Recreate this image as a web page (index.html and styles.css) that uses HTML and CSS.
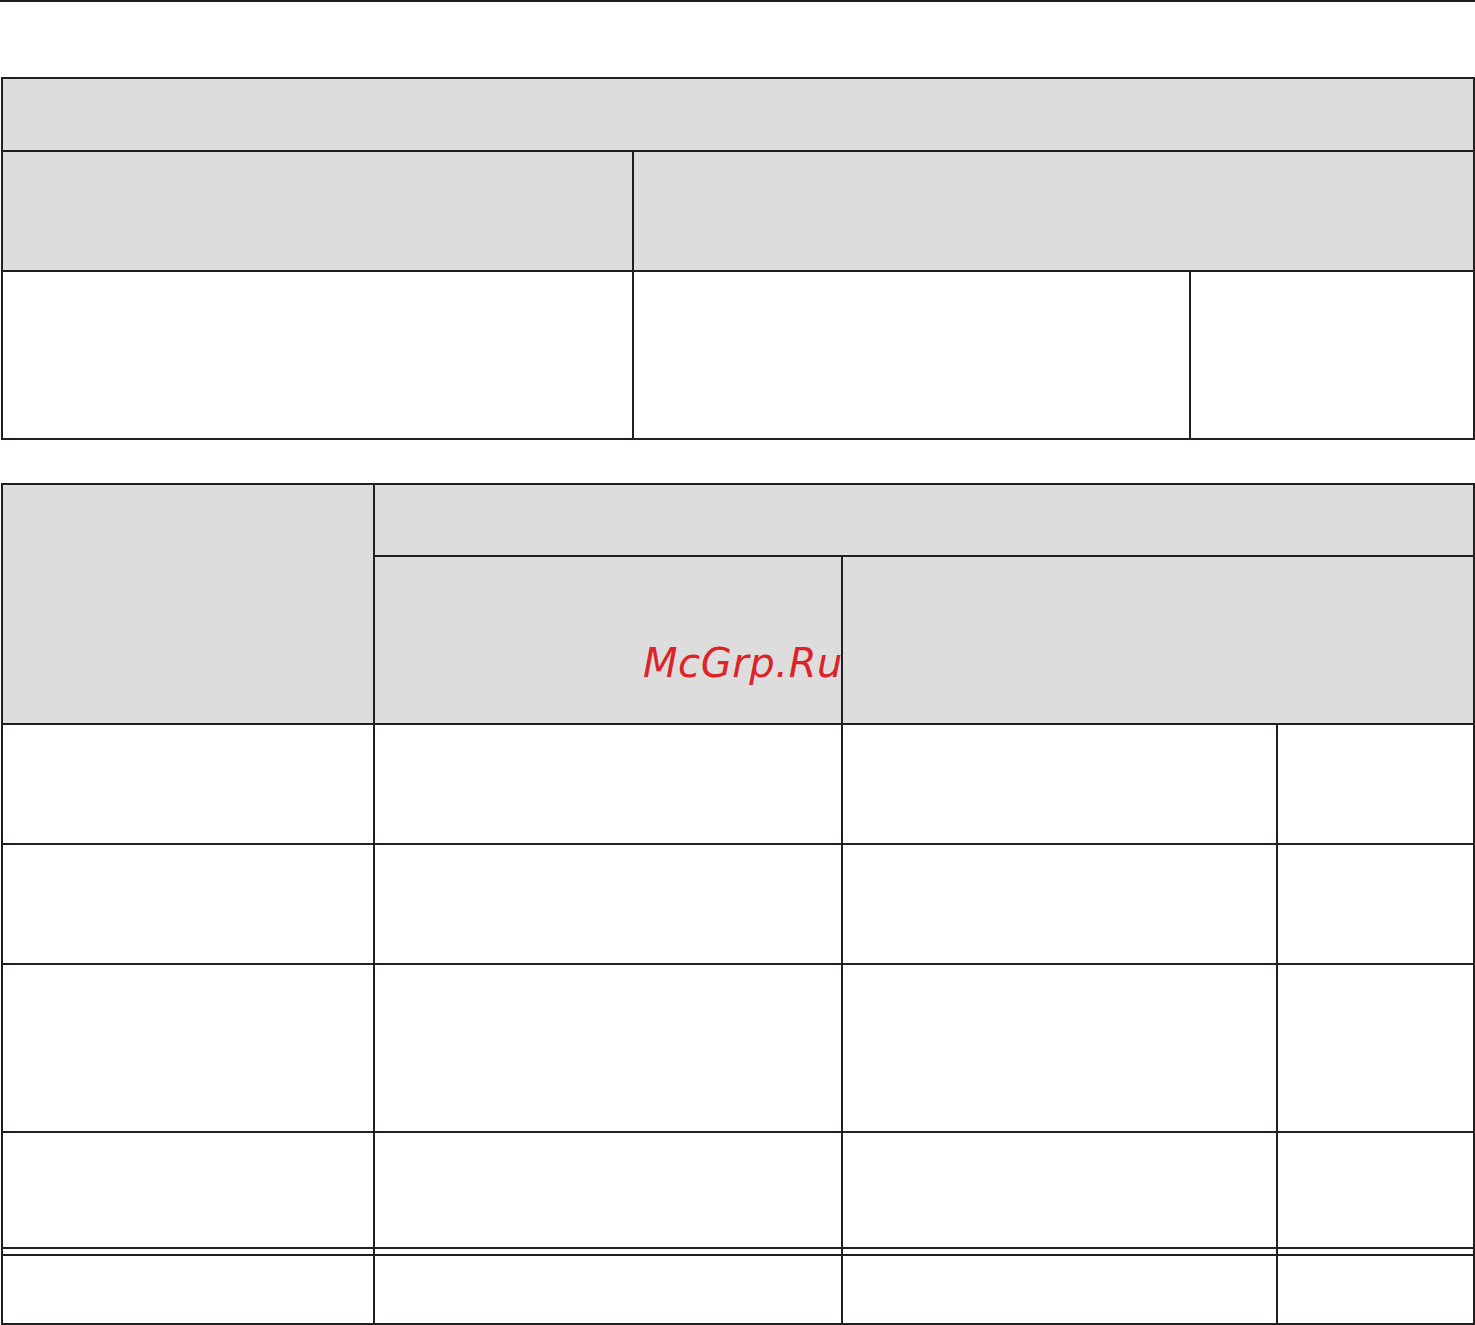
FILE: index.html
```html
<!DOCTYPE html>
<html lang="ru">
<head>
<meta charset="utf-8">
<title>Таблица</title>
<link rel="stylesheet" href="styles.css">
</head>
<body>
<div class="page">
  <div class="top-rule"></div>

  <div class="grid grid-one">
    <div class="cell gray span-all"></div>
    <div class="cell gray"></div>
    <div class="cell gray span-two"></div>
    <div class="cell"></div>
    <div class="cell"></div>
    <div class="cell"></div>
  </div>

  <div class="grid grid-two">
    <div class="cell gray head-left"></div>
    <div class="cell gray head-top"></div>
    <div class="cell gray head-mid"></div>
    <div class="cell gray head-right"></div>

    <div class="cell"></div><div class="cell"></div><div class="cell"></div><div class="cell"></div>
    <div class="cell"></div><div class="cell"></div><div class="cell"></div><div class="cell"></div>
    <div class="cell"></div><div class="cell"></div><div class="cell"></div><div class="cell"></div>
    <div class="cell"></div><div class="cell"></div><div class="cell"></div><div class="cell"></div>
    <div class="cell"></div><div class="cell"></div><div class="cell"></div><div class="cell"></div>
    <div class="cell"></div><div class="cell"></div><div class="cell"></div><div class="cell"></div>
  </div>

  <div class="watermark">McGrp.Ru</div>
</div>
</body>
</html>
```

FILE: styles.css
```css
html, body {
  margin: 0;
  padding: 0;
  background: #ffffff;
}

body {
  font-family: "DejaVu Sans", "Liberation Sans", sans-serif;
}

.page {
  position: relative;
  width: 1475px;
  height: 1325px;
  overflow: hidden;
}

.top-rule {
  height: 2px;
  background: #231f20;
}

.grid {
  display: grid;
  gap: 2px;
  padding: 2px;
  background: #231f20;
  width: 1474px;
  box-sizing: border-box;
  margin-left: 1px;
}

.cell {
  background: #ffffff;
}

.cell.gray {
  background: #dddddd;
}

.grid-one {
  margin-top: 75px;
  grid-template-columns: 629px 555px 282px;
  grid-template-rows: 71px 118px 166px;
}

.span-all {
  grid-column: 1 / 4;
}

.span-two {
  grid-column: 2 / 4;
}

.grid-two {
  margin-top: 43px;
  grid-template-columns: 370px 466px 433px 195px;
  grid-template-rows: 70px 166px 118px 118px 166px 114px 5px 67px;
}

.head-left {
  grid-column: 1;
  grid-row: 1 / 3;
}

.head-top {
  grid-column: 2 / 5;
  grid-row: 1;
}

.head-mid {
  grid-column: 2;
  grid-row: 2;
}

.head-right {
  grid-column: 3 / 5;
  grid-row: 2;
}

.watermark {
  position: absolute;
  left: 643px;
  top: 643px;
  font-family: "DejaVu Sans", sans-serif;
  font-style: italic;
  font-size: 40px;
  line-height: 40px;
  letter-spacing: 0.6px;
  color: #dc2428;
  white-space: nowrap;
}
```
